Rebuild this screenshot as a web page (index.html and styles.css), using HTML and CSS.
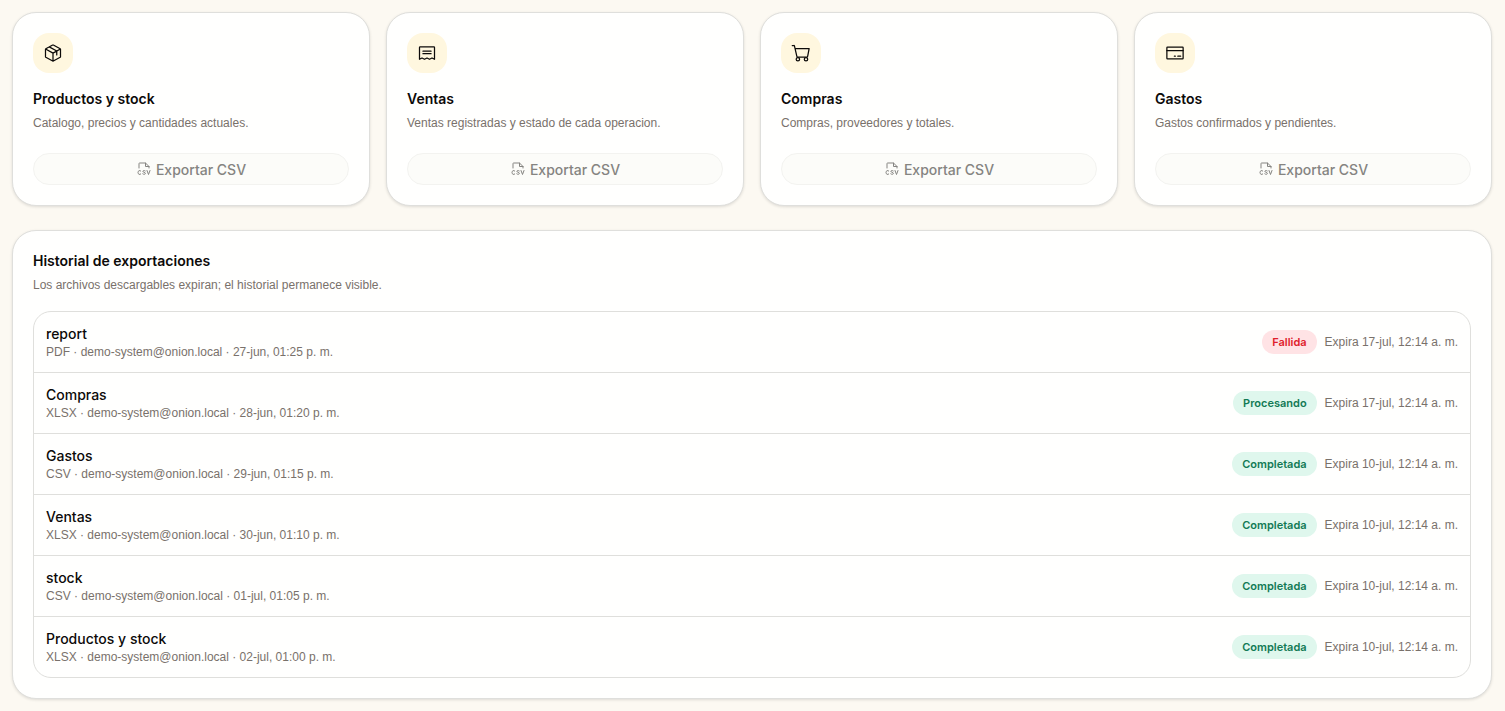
FILE: index.html
```html
<!DOCTYPE html>
<html lang="es">
<head>
  <meta charset="UTF-8">
  <meta name="viewport" content="width=device-width, initial-scale=1">
  <title>Exportaciones</title>
  <link rel="stylesheet" href="styles.css">
</head>
<body>

  <!-- SHARED ICON -->
  <svg class="sprite" aria-hidden="true">
    <symbol id="icon-csv" viewBox="0 0 256 256">
      <path d="M48 112V40a8 8 0 0 1 8-8h96l56 56v24M152 32v56h56"/>
      <path d="M76 160c-16-18-44-6-44 24s28 42 44 24M148 158c-10-8-38-8-38 8 0 18 40 12 40 32 0 20-32 18-42 8M176 152l24 64 24-64"/>
    </symbol>
  </svg>

  <main class="page">

    <!-- EXPORT CARDS -->
    <section class="cards">
      <article class="card">
        <div class="card-icon">
          <svg viewBox="0 0 256 256" aria-hidden="true">
            <path d="M128 129v103M33 77l95 52 95-52M132 25l88 48a8 8 0 0 1 4 7v96a8 8 0 0 1-4 7l-88 48a8 8 0 0 1-8 0l-88-48a8 8 0 0 1-4-7V80a8 8 0 0 1 4-7l88-48a8 8 0 0 1 8 0zM80 49l96 53v50"/>
          </svg>
        </div>
        <h2>Productos y stock</h2>
        <p>Catalogo, precios y cantidades actuales.</p>
        <button type="button" class="export-btn" disabled><svg aria-hidden="true"><use href="#icon-csv"/></svg>Exportar CSV</button>
      </article>

      <article class="card">
        <div class="card-icon">
          <svg viewBox="0 0 256 256" aria-hidden="true">
            <path d="M32 208V56a8 8 0 0 1 8-8h176a8 8 0 0 1 8 8v152l-32-16-32 16-32-16-32 16-32-16zM76 104h104M76 136h104"/>
          </svg>
        </div>
        <h2>Ventas</h2>
        <p>Ventas registradas y estado de cada operacion.</p>
        <button type="button" class="export-btn" disabled><svg aria-hidden="true"><use href="#icon-csv"/></svg>Exportar CSV</button>
      </article>

      <article class="card">
        <div class="card-icon">
          <svg viewBox="0 0 256 256" aria-hidden="true">
            <path d="M16 32h20a8 8 0 0 1 8 6l31 132a16 16 0 0 0 16 12h107a16 16 0 0 0 15-12l19-98H52"/>
            <circle cx="88" cy="208" r="22"/>
            <circle cx="192" cy="208" r="22"/>
          </svg>
        </div>
        <h2>Compras</h2>
        <p>Compras, proveedores y totales.</p>
        <button type="button" class="export-btn" disabled><svg aria-hidden="true"><use href="#icon-csv"/></svg>Exportar CSV</button>
      </article>

      <article class="card">
        <div class="card-icon">
          <svg viewBox="0 0 256 256" aria-hidden="true">
            <rect x="24" y="52" width="208" height="152" rx="8"/>
            <path d="M24 96h208M164 168h36M120 168h12"/>
          </svg>
        </div>
        <h2>Gastos</h2>
        <p>Gastos confirmados y pendientes.</p>
        <button type="button" class="export-btn" disabled><svg aria-hidden="true"><use href="#icon-csv"/></svg>Exportar CSV</button>
      </article>
    </section>

    <!-- EXPORT HISTORY -->
    <section class="card history">
      <h2>Historial de exportaciones</h2>
      <p>Los archivos descargables expiran; el historial permanece visible.</p>

      <ul class="history-list">
        <li>
          <div class="export-info">
            <h3>report</h3>
            <p>PDF · demo-system@onion.local · 27-jun, 01:25 p. m.</p>
          </div>
          <span class="badge badge-failed">Fallida</span>
          <span class="expires">Expira 17-jul, 12:14 a. m.</span>
        </li>
        <li>
          <div class="export-info">
            <h3>Compras</h3>
            <p>XLSX · demo-system@onion.local · 28-jun, 01:20 p. m.</p>
          </div>
          <span class="badge">Procesando</span>
          <span class="expires">Expira 17-jul, 12:14 a. m.</span>
        </li>
        <li>
          <div class="export-info">
            <h3>Gastos</h3>
            <p>CSV · demo-system@onion.local · 29-jun, 01:15 p. m.</p>
          </div>
          <span class="badge">Completada</span>
          <span class="expires">Expira 10-jul, 12:14 a. m.</span>
        </li>
        <li>
          <div class="export-info">
            <h3>Ventas</h3>
            <p>XLSX · demo-system@onion.local · 30-jun, 01:10 p. m.</p>
          </div>
          <span class="badge">Completada</span>
          <span class="expires">Expira 10-jul, 12:14 a. m.</span>
        </li>
        <li>
          <div class="export-info">
            <h3>stock</h3>
            <p>CSV · demo-system@onion.local · 01-jul, 01:05 p. m.</p>
          </div>
          <span class="badge">Completada</span>
          <span class="expires">Expira 10-jul, 12:14 a. m.</span>
        </li>
        <li>
          <div class="export-info">
            <h3>Productos y stock</h3>
            <p>XLSX · demo-system@onion.local · 02-jul, 01:00 p. m.</p>
          </div>
          <span class="badge">Completada</span>
          <span class="expires">Expira 10-jul, 12:14 a. m.</span>
        </li>
      </ul>
    </section>
  </main>

</body>
</html>
```
FILE: styles.css
```css
* {
  box-sizing: border-box;
}

body {
  background-color: #fcf9f2;
  color: #0c0a09;
  font-family: Inter, Arial, sans-serif;
  font-size: 12px;
  margin: 0;
}

h2, h3, p, ul {
  margin: 0;
  padding: 0;
}

svg {
  fill: none;
  stroke: currentColor;
  stroke-width: 16;
  stroke-linecap: round;
  stroke-linejoin: round;
}

.sprite {
  display: none;
}

.page {
  display: flex;
  flex-direction: column;
  gap: 24px;
  padding: 12px 13px 12px 12px;
}

.cards {
  display: grid;
  grid-template-columns: repeat(4, 1fr);
  gap: 16px;
}

.card {
  background: #fffffe;
  border: 1px solid #dfdfdc;
  border-radius: 24px;
  padding: 20px;
  box-shadow: 0 1px 3px rgba(0, 0, 0, 0.12);
}

.card-icon {
  display: flex;
  align-items: center;
  justify-content: center;
  width: 40px;
  height: 40px;
  margin-bottom: 16px;
  border-radius: 16px;
  background: #fff7df;
}

.card-icon svg {
  width: 20px;
  height: 20px;
}

h2 {
  font-size: 14px;
  font-weight: 600;
  line-height: 20px;
}

p, .expires {
  color: #79716b;
  font-family: "Liberation Sans", Arial, sans-serif;
  line-height: 20px;
}

.card > p {
  margin-top: 4px;
}

.export-btn {
  display: flex;
  align-items: center;
  justify-content: center;
  gap: 4px;
  width: 100%;
  height: 32px;
  margin-top: 20px;
  border: 1px solid #f3f3f0;
  border-radius: 16px;
  background: #fcfcf9;
  color: #858481;
  font-family: inherit;
  font-size: 14px;
  font-weight: 500;
}

.export-btn svg {
  width: 16px;
  height: 16px;
}

.history-list {
  margin-top: 16px;
  border: 1px solid #dfdfdc;
  border-radius: 18px;
  list-style: none;
}

.history-list li {
  display: flex;
  align-items: center;
  gap: 8px;
  padding: 12px;
}

.history-list li + li {
  border-top: 1px solid #dfdfdc;
}

.export-info {
  flex: 1;
}

h3 {
  font-size: 14px;
  font-weight: 500;
  line-height: 20px;
}

.export-info p {
  line-height: 16px;
}

.badge {
  padding: 0 10px;
  border-radius: 12px;
  background: #dff7ed;
  color: #127a55;
  font-size: 11px;
  font-weight: 600;
  line-height: 24px;
}

.badge-failed {
  background: #ffe3e5;
  color: #e0202b;
}
```
